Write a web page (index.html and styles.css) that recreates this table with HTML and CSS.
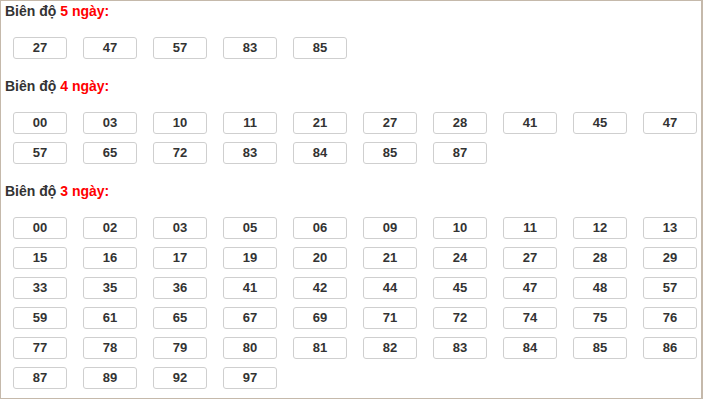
FILE: index.html
```html
<!DOCTYPE html>
<html lang="vi">
<head>
<meta charset="utf-8">
<title>Biên độ</title>
<link rel="stylesheet" href="styles.css">
</head>
<body>
<div class="frame">
  <section class="group">
    <h3 class="title">Biên độ <span class="hl">5 ngày:</span></h3>
    <ul class="nums">
      <li>27</li><li>47</li><li>57</li><li>83</li><li>85</li>
    </ul>
  </section>
  <section class="group">
    <h3 class="title">Biên độ <span class="hl">4 ngày:</span></h3>
    <ul class="nums">
      <li>00</li><li>03</li><li>10</li><li>11</li><li>21</li><li>27</li><li>28</li><li>41</li><li>45</li><li>47</li>
      <li>57</li><li>65</li><li>72</li><li>83</li><li>84</li><li>85</li><li>87</li>
    </ul>
  </section>
  <section class="group">
    <h3 class="title">Biên độ <span class="hl">3 ngày:</span></h3>
    <ul class="nums">
      <li>00</li><li>02</li><li>03</li><li>05</li><li>06</li><li>09</li><li>10</li><li>11</li><li>12</li><li>13</li>
      <li>15</li><li>16</li><li>17</li><li>19</li><li>20</li><li>21</li><li>24</li><li>27</li><li>28</li><li>29</li>
      <li>33</li><li>35</li><li>36</li><li>41</li><li>42</li><li>44</li><li>45</li><li>47</li><li>48</li><li>57</li>
      <li>59</li><li>61</li><li>65</li><li>67</li><li>69</li><li>71</li><li>72</li><li>74</li><li>75</li><li>76</li>
      <li>77</li><li>78</li><li>79</li><li>80</li><li>81</li><li>82</li><li>83</li><li>84</li><li>85</li><li>86</li>
      <li>87</li><li>89</li><li>92</li><li>97</li>
    </ul>
  </section>
</div>
</body>
</html>
```

FILE: styles.css
```css
html, body {
  margin: 0;
  padding: 0;
  background: #fff;
}
body {
  font-family: "Liberation Sans", Arial, sans-serif;
  color: #333;
  overflow: hidden;
}
.frame {
  box-sizing: border-box;
  width: 703px;
  height: 399px;
  border: 1px solid #c5b9ab;
  border-right-width: 2px;
  padding: 0 0 0 4px;
}
.group {
  margin-bottom: 17px;
}
.title {
  margin: 0;
  font-size: 14px;
  font-weight: bold;
  line-height: 20px;
  color: #333;
}
.hl {
  color: #f00;
}
.nums {
  list-style: none;
  margin: 16px 0 0 8px;
  padding: 0;
  display: grid;
  grid-template-columns: repeat(10, 54px);
  column-gap: 16px;
  row-gap: 8px;
}
.nums li {
  box-sizing: border-box;
  height: 22px;
  border: 1px solid #cfcfcf;
  border-radius: 3px;
  text-align: center;
  font-size: 13px;
  font-weight: bold;
  line-height: 20px;
  color: #333;
}
```
